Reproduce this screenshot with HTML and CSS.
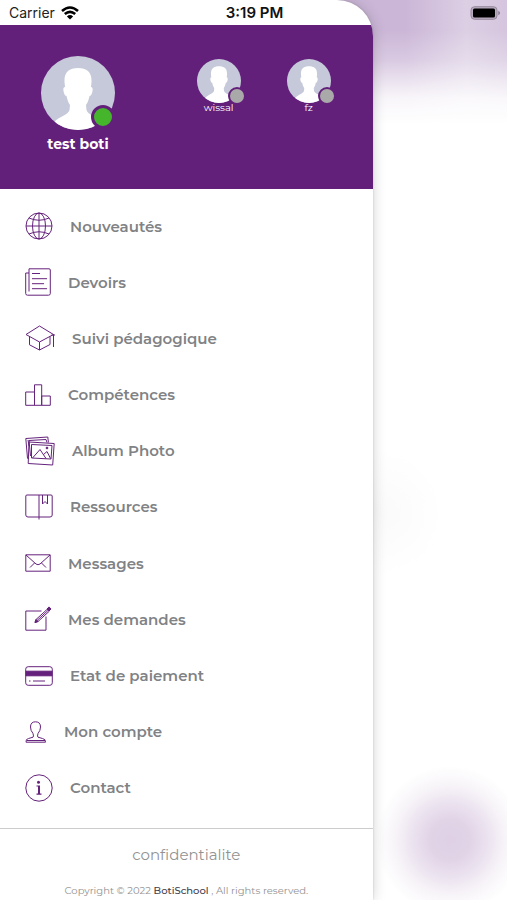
FILE: index.html
```html
<!DOCTYPE html>
<html lang="fr">
<head>
<meta charset="utf-8">
<meta name="viewport" content="width=device-width, initial-scale=1">
<title>BotiSchool</title>
<link rel="stylesheet" href="styles.css">
</head>
<body>
<svg class="defs" aria-hidden="true">
  <symbol id="avatar" viewBox="0 0 74 74">
    <clipPath id="disc"><circle cx="37" cy="37" r="37"/></clipPath>
    <g clip-path="url(#disc)">
      <rect width="74" height="74" fill="#c6c9d9"/>
      <path fill="#fff" d="M37 12C28 12 23 16 23.500 26L24 31C22 31 22 34 23 37C23.500 39 24.500 40 25.500 40C26.500 44 27 46 29 49L28.500 54C27 59 19 60 13 66V76H61V66C55 60 47 59 45.500 54L45 49C47 46 47.500 44 48.500 40C49.500 40 50.500 39 51 37C52 34 52 31 50 31L50.500 26C51 16 46 12 37 12Z"/>
    </g>
  </symbol>
</svg>
<div class="statusbar">
  <div class="carrier">
    <span>Carrier</span>
    <svg width="18" height="14" viewBox="0 0 18 14" fill="none" stroke="#000" stroke-width="2.600"><path d="M1 5Q9-2 17 5M3.800 8Q9 3.600 14.200 8"/><path d="M9 13.500L5.900 10.400Q9 7.800 12.100 10.400Z" fill="#000" stroke="none"/></svg>
  </div>
  <time>3:19 PM</time>
  <svg class="battery" width="30" height="14" viewBox="0 0 30 14"><rect x="1" y=".7" width="26" height="12.600" rx="3.500" fill="#b9abc0" stroke="#95899c"/><rect x="3" y="2.500" width="22" height="9" rx="1.500"/><path d="M28.300 4.800Q30 5.500 30 7T28.300 9.200Z" fill="#85798c"/></svg>
</div>
<aside class="drawer">
  <header class="profiles">
    <button class="profile main" type="button">
      <span class="photo"><svg viewBox="0 0 74 74"><use href="#avatar"/></svg><i class="dot"></i></span>
      <span>test boti</span>
    </button>
    <div class="others">
      <button class="profile" type="button">
        <span class="photo"><svg viewBox="0 0 74 74"><use href="#avatar"/></svg><i class="dot"></i></span>
        <span>wissal</span>
      </button>
      <button class="profile" type="button">
        <span class="photo"><svg viewBox="0 0 74 74"><use href="#avatar"/></svg><i class="dot"></i></span>
        <span>fz</span>
      </button>
    </div>
  </header>
  <nav class="menu">
    <a href="#"><svg width="28" height="28" viewBox="0 0 28 28"><circle cx="14" cy="14" r="13"/><ellipse cx="14" cy="14" rx="6.500" ry="13"/><path d="M14 1V27M1 14H27M4 6Q14 10.500 24 6M4 22Q14 17.500 24 22"/></svg>Nouveautés</a>
    <a href="#"><svg width="26" height="28" viewBox="0 0 26 28"><path d="M4 .8H24Q25.300.8 25.300 2V25.500Q25.300 27.200 23.500 27.200H2.500Q.7 27.200.7 25.500V5H4M4 .8V23.500M7 5.500H15M7 10.700H22M7 15.700H19M7 20.700H22"/></svg>Devoirs</a>
    <a href="#"><svg width="30" height="26" viewBox="0 0 30 26"><path d="M1 9.500L14.500 1L28.500 9.500L14.500 17ZM4.500 11.800V19.800L14.500 25L25 19.500V11.500M14.500 17V25M28.500 9.500V22M26.500 10H30"/></svg>Suivi pédagogique</a>
    <a href="#"><svg width="26" height="22" viewBox="0 0 26 22"><path d="M.7 21.300V8H9.500V21.300ZM9.500 21.300V.8H16.700V21.300ZM16.700 21.300V12H25.300V21.300Z"/></svg>Compétences</a>
    <a href="#"><svg width="30" height="30" viewBox="0 0 30 30"><path d="M4 22.500L2.500 22.300L.8 2.500L22.800 1L23.400 6.500M5.500 20L4 4.500L21 3.500L22 6.500M4 6L29.200 7.500L27.700 29L3.200 27.500ZM6.500 8.500L27 9.500L26 23L6.500 22ZM3 4L4 10M7.500 22L15 13.500L21 22.500M18.500 18.500L22 15.500L25.500 22.500"/><circle cx="22" cy="12" r=".9" fill="#65227c"/></svg>Album Photo</a>
    <a href="#"><svg width="28" height="26" viewBox="0 0 28 26"><path d="M14 23H3Q.8 23 .8 21V2Q.8 1 2 1H26Q27.200 1 27.200 2V21Q27.200 23 25 23H14V25.500M14 1V23M17.500 1V10L20 7.500L22.500 10V1"/></svg>Ressources</a>
    <a href="#"><svg width="26" height="18" viewBox="0 0 26 18"><path d="M.8.8H25.200V17.200H.8ZM1 1L11 10Q13 11.500 15 10L25 1M5 13.500L9.500 9M21 13.500L16.500 9"/></svg>Messages</a>
    <a href="#"><svg width="26" height="24" viewBox="0 0 26 24"><path d="M16.500 4H.8V23.200H21V9.500M11 12.500L22.500 2L24.500 4L13 14.500L10 15.500ZM12 13.500L23.500 3"/><path d="M22 2L24-.1L26 2L24 4ZM11 12.500L13 14.500L10 15.500Z" fill="#65227c"/></svg>Mes demandes</a>
    <a href="#"><svg width="28" height="20" viewBox="0 0 28 20"><rect x=".7" y=".7" width="26.600" height="18.600" rx="2.500"/><path d="M1 5.200H27V9.800H1Z" fill="#65227c"/><path d="M4 15H5.500M8 15H20"/></svg>Etat de paiement</a>
    <a href="#"><svg width="22" height="22" viewBox="0 0 22 22"><path d="M1 21.200Q.5 18 3.500 17.500L8 16.200Q9 15.500 8 12.500Q5.500 9.500 5.500 6Q5.500.8 10.500.8T15.500 6Q15.500 9.500 13 12.500Q12 15.500 13 16.200L17.500 17.500Q20.800 18 20.500 21.200ZM2 19.500H20"/></svg>Mon compte</a>
    <a href="#"><svg width="28" height="28" viewBox="0 0 28 28"><circle cx="14" cy="14" r="13.200"/><circle cx="13.500" cy="8.300" r="1.500" fill="#65227c" stroke="none"/><path d="M11.500 11.500H15V19.500H16.500V20.700H11.500V19.500H13V12.500H11.500Z" fill="#65227c" stroke="none"/></svg>Contact</a>
  </nav>
  <footer class="foot">
    <a href="#">confidentialite</a>
    <p>Copyright © 2022 <b>BotiSchool</b> , All rights reserved.</p>
  </footer>
</aside>
</body>
</html>
```
FILE: styles.css
```css
* {
  box-sizing: border-box;
}

body {
  margin: 0;
  min-height: 100vh;
  font-family: Montserrat, Inter, "Liberation Sans", sans-serif;
  background:
    radial-gradient(circle 74px at calc(100% - 57px) calc(100% - 60px), #dfd0e5 0%, #e1d4e7 28%, #ebe2ef 50%, #f8f5f9 76%, #fff0 100%),
    radial-gradient(circle 64px at 75% 57%, #fafafa, #fff0),
    linear-gradient(#fff0 30px, #fff4 60px, #fff9 80px, #fffd 98px, #fff 124px) top / 100% 124px no-repeat,
    linear-gradient(90deg, #cbb6d7 80%, #dccfe4 92%, #d5c5de) top / 100% 124px no-repeat,
    #fff;
}

.defs {
  position: absolute;
  width: 0;
  height: 0;
}

.statusbar {
  position: absolute;
  z-index: 1;
  inset: 0 0 auto;
  height: 26px;
  padding: 0 7px 0 9px;
  display: grid;
  grid-template-columns: 1fr auto 1fr;
  align-items: center;
  font: 14px/26px Inter, sans-serif;
  color: #222;
}

.carrier {
  display: flex;
  align-items: center;
  gap: 6px;
}

time {
  font-size: 15px;
  font-weight: 600;
  color: #111;
}

.battery {
  justify-self: end;
}

.drawer {
  width: 73.5%;
  min-height: 100vh;
  padding-top: 25px;
  display: flex;
  flex-direction: column;
  overflow: hidden;
  background: #fff;
  border-top-right-radius: 36px;
  box-shadow: 0 0 2px #0003, 0 0 14px #0000002e;
}

.profiles {
  display: flex;
  align-items: flex-start;
  height: 164px;
  padding: 31px 42px 0 41px;
  justify-content: space-between;
  background: #63207b;
}

.profile {
  display: flex;
  flex-direction: column;
  align-items: center;
  width: 44px;
  padding: 0;
  border: 0;
  background: none;
  color: #fff;
  font: 10px/10px Montserrat, Inter, sans-serif;
}

.photo {
  position: relative;
  width: 100%;
}

.photo svg {
  display: block;
  width: 100%;
}

.dot {
  position: absolute;
  right: -5px;
  bottom: -2px;
  width: 18px;
  height: 18px;
  border: 2px solid #63207b;
  border-radius: 50%;
  background: #a9a9a9;
}

.main {
  width: 74px;
  gap: 4px;
  font-size: 14px;
  line-height: 20px;
  font-weight: 700;
}

.main .dot {
  right: 0;
  bottom: 1px;
  width: 24px;
  height: 24px;
  border-width: 3px;
  background: #45b52c;
}

.others {
  display: flex;
  gap: 46px;
  padding-top: 3px;
}

.menu {
  flex: 1;
  display: grid;
  grid-auto-rows: 1fr;
  padding: 9px 0 12px;
}

.menu a {
  display: flex;
  align-items: center;
  gap: 17px;
  min-height: 40px;
  padding-left: 25px;
  color: #808285;
  font-size: 15px;
  font-weight: 600;
  text-decoration: none;
}

.menu svg {
  fill: none;
  stroke: #65227c;
  stroke-width: 1;
  overflow: visible;
}

.foot {
  height: 72px;
  padding-top: 16px;
  border-top: 1px solid #ccc;
  text-align: center;
  color: #929292;
}

.foot a {
  display: block;
  color: inherit;
  font-size: 15px;
  line-height: 20px;
  text-decoration: none;
}

.foot p {
  margin: 19px 0 0;
  font-size: 10px;
  line-height: 14px;
}

.foot b {
  color: #3f3d4c;
  font-weight: 500;
}
```
